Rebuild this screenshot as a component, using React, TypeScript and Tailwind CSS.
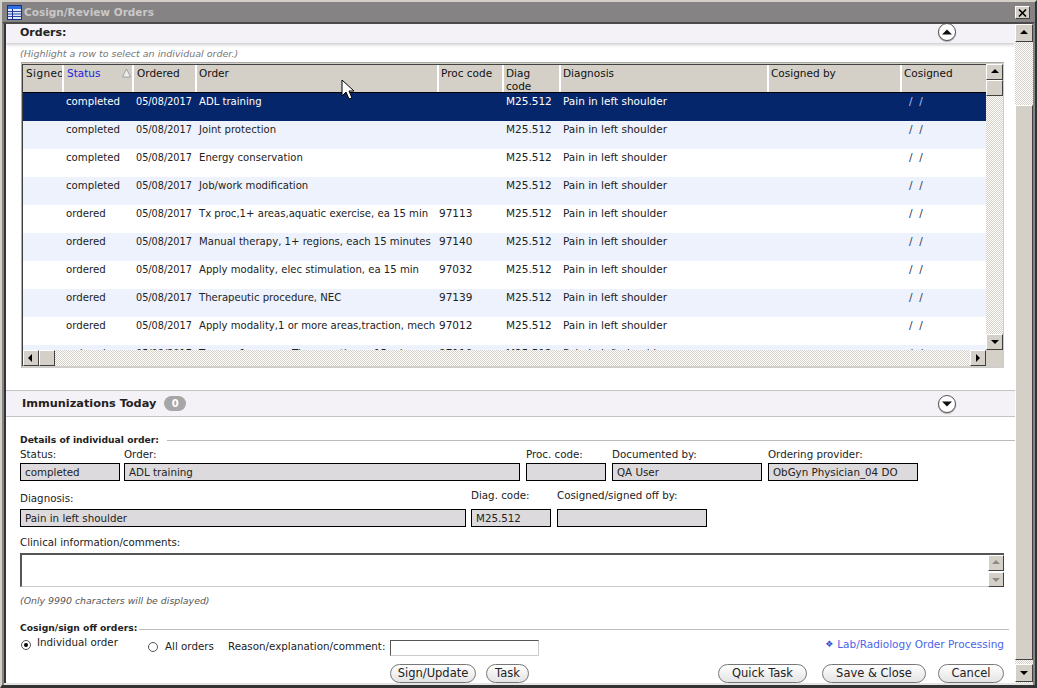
const font = 'font-["DejaVu_Sans",sans-serif]';

const rows = [
  ['completed', '05/08/2017', 'ADL training', ''],
  ['completed', '05/08/2017', 'Joint protection', ''],
  ['completed', '05/08/2017', 'Energy conservation', ''],
  ['completed', '05/08/2017', 'Job/work modification', ''],
  ['ordered', '05/08/2017', 'Tx proc,1+ areas,aquatic exercise, ea 15 min', '97113'],
  ['ordered', '05/08/2017', 'Manual therapy, 1+ regions, each 15 minutes', '97140'],
  ['ordered', '05/08/2017', 'Apply modality, elec stimulation, ea 15 min', '97032'],
  ['ordered', '05/08/2017', 'Therapeutic procedure, NEC', '97139'],
  ['ordered', '05/08/2017', 'Apply modality,1 or more areas,traction, mech', '97012'],
  ['ordered', '05/08/2017', 'Tx proc,1+ areas, Therapeutic ex, 15 min', '97110'],
];

const raised = 'border border-t-white border-l-white border-r-[#404040] border-b-[#404040] bg-[#d4d0c8]';
const dither = 'bg-[repeating-conic-gradient(#d4d0c8_0_25%,#ffffff_0_50%)] bg-[length:2px_2px]';

function Arrow({ dir, muted }: { dir: 'up' | 'down' | 'left' | 'right'; muted?: boolean }) {
  const points = {
    up: '1,6 5,2 9,6',
    down: '1,3 5,7 9,3',
    left: '6,1 2,5 6,9',
    right: '3,1 7,5 3,9',
  }[dir];
  return (
    <svg width="10" height="10" viewBox="0 0 10 10">
      <polygon points={points} fill={muted ? '#8a8a8a' : '#000'} />
    </svg>
  );
}

function ScrollBtn({ dir, className, muted }: { dir: 'up' | 'down' | 'left' | 'right'; className: string; muted?: boolean }) {
  return (
    <div className={`flex shrink-0 items-center justify-center ${raised} ${className}`}>
      <Arrow dir={dir} muted={muted} />
    </div>
  );
}

function Head({ label, className, active }: { label: string; className: string; active?: boolean }) {
  return (
    <div className={`relative shrink-0 overflow-hidden whitespace-nowrap border-white pt-[2px] text-[10.5px] leading-[13px] ${active ? 'text-[#2222dd]' : 'text-[#111]'} ${className}`}>
      {label}
      {active && (
        <svg width="9" height="10" viewBox="0 0 9 10" className="absolute right-[1px] top-[3px]">
          <polygon points="4.5,1 8.5,9 0.5,9" fill="#eeeeee" stroke="#888" strokeWidth="0.7" />
        </svg>
      )}
    </div>
  );
}

function Round({ dir }: { dir: 'up' | 'down' }) {
  return (
    <div className="flex h-[18px] w-[18px] items-center justify-center rounded-full border border-[#555] bg-white shadow-[0_1px_1px_#aaa]">
      <svg width="10" height="6" viewBox="0 0 10 6">
        <polygon points={dir === 'up' ? '0,5.5 5,0.5 10,5.5' : '0,0.5 5,5.5 10,0.5'} fill="#111" />
      </svg>
    </div>
  );
}

function Field({ label, value, className, labelClass }: { label: string; value?: string; className: string; labelClass: string }) {
  return (
    <div className={`shrink-0 ${className}`}>
      <div className={`whitespace-nowrap text-[10.3px] leading-[13px] text-[#222] ${labelClass}`}>{label}</div>
      <div className="h-[18px] whitespace-nowrap border border-black bg-[#dcdadc] pl-1 text-[10.3px] leading-[16px] text-[#222]">{value}</div>
    </div>
  );
}

function Pill({ label, className }: { label: string; className: string }) {
  return (
    <div className={`flex h-[19px] shrink-0 items-center justify-center rounded-full border border-[#777] bg-gradient-to-b from-white to-[#e4e4e4] text-[11.5px] text-[#222] ${className}`}>
      {label}
    </div>
  );
}

export default function App() {
  return (
    <div className={`relative flex h-[688px] w-[1037px] flex-col overflow-hidden border-2 border-b-[3px] border-t-[#d4d0c8] border-l-[#d4d0c8] border-r-[#333] border-b-[#333] ${font}`}>
      {/* Title bar */}
      <div className="flex h-[20px] shrink-0 items-center bg-[#858384] pl-[5px] pr-[5px] pt-[1px]">
        <svg width="15" height="15" viewBox="0 0 15 15" className="mr-[2px] shrink-0">
          <rect x="0.5" y="0.5" width="14" height="14" fill="#dfe8f8" stroke="#1c2f80" />
          <rect x="1" y="1" width="13" height="3" fill="#2f6fe0" />
          <path d="M1 6.5h13M1 9h13M1 11.5h13" stroke="#2a4ca8" />
          <path d="M5.5 4v10" stroke="#1c2f80" />
        </svg>
        <span className="mt-[1px] text-[10.5px] font-bold text-[#c9c7c8]">Cosign/Review Orders</span>
        <div className={`ml-auto flex h-[13px] w-[15px] items-center justify-center ${raised}`}>
          <svg width="9" height="8" viewBox="0 0 9 8">
            <path d="M1 0.5l7 7M8 0.5l-7 7" stroke="#000" strokeWidth="1.6" />
          </svg>
        </div>
      </div>

      <div className="flex min-h-0 flex-1 border-x-2 border-t-2 border-x-[#858384] border-t-[#4a4a4a] bg-[#e4e4e4] pb-[2px]">
        {/* Main form */}
        <div className="flex min-w-0 flex-1 flex-col overflow-hidden border-l-2 border-[#333] bg-white">
          {/* Orders band */}
          <div className="flex h-[19px] shrink-0 items-center bg-[#f5f2f7] pb-[2px] pl-[14px] pr-[59px] shadow-[0_2px_3px_#d0d0d0]">
            <span className="mt-[1px] text-[11px] font-bold text-[#222]">Orders:</span>
            <div className="mb-[1px] ml-auto"><Round dir="up" /></div>
          </div>
          <div className="h-[19px] shrink-0 pl-[14px] pt-[5px] text-[9.5px] italic leading-[12px] text-[#777]">
            (Highlight a row to select an individual order.)
          </div>

          {/* Table */}
          <div className="ml-[15px] flex h-[306px] w-[983px] shrink-0 flex-col border border-[#aaa] border-b-[#ccc] border-r-[#ccc] bg-[#d4d0c8] pb-[1px] pt-[1px]">
            <div className="flex min-h-0 flex-1">
              <div className="flex min-w-0 flex-1 flex-col overflow-hidden border-l border-t border-[#404040]">
                <div className="flex h-[28px] shrink-0 border-b border-black bg-[#d4d0c8]">
                  <Head label="Signed" className="w-[39px] pl-[3px] tracking-[0.4px]" />
                  <Head label="Status" className="w-[70px] border-l-2 pl-[3px]" active />
                  <Head label="Ordered" className="w-[63px] border-l-2 pl-[3px]" />
                  <Head label="Order" className="w-[242px] border-l-2 pl-[2px]" />
                  <Head label="Proc code" className="w-[65px] border-l-2 pl-[2px]" />
                  <Head label="Diag code" className="w-[57px] !whitespace-normal border-l-2 pl-[2px] pr-[14px]" />
                  <Head label="Diagnosis" className="w-[208px] border-l-2 pl-[2px]" />
                  <Head label="Cosigned by" className="w-[133px] border-l-2 pl-[2px]" />
                  <Head label="Cosigned" className="w-[86px] border-l-2 pl-[2px]" />
                </div>
                <div className="min-h-0 flex-1 overflow-hidden">
                  {rows.map((r, i) => (
                    <div
                      key={i}
                      className={`flex h-[28px] pt-[1px] text-[10.5px] leading-[14px] whitespace-nowrap ${i === 0 ? 'bg-[#06266b] text-white' : i % 2 ? 'bg-[#edf2fc] text-[#222]' : 'bg-white text-[#222]'}`}
                    >
                      <div className="w-[39px] shrink-0" />
                      <div className="w-[70px] shrink-0 pl-[4px] pt-[1px] text-[10.2px]">{r[0]}</div>
                      <div className="w-[63px] shrink-0 pl-[4px] pt-[1px] text-[9.7px]">{r[1]}</div>
                      <div className="w-[242px] shrink-0 overflow-hidden pl-[4px] pt-[1px] text-[10.1px]">{r[2]}</div>
                      <div className="w-[65px] shrink-0 pl-[2px]">{r[3]}</div>
                      <div className="w-[57px] shrink-0 pl-[4px]">M25.512</div>
                      <div className="w-[208px] shrink-0 pl-[4px]">Pain in left shoulder</div>
                      <div className="w-[133px] shrink-0" />
                      <div className={`w-[86px] shrink-0 whitespace-pre pl-[9px] ${i === 0 ? 'text-[#a8c8ff]' : 'text-[#335]'}`}>{'/  /'}</div>
                    </div>
                  ))}
                </div>
              </div>
              {/* Table vertical scrollbar */}
              <div className={`flex w-[17px] shrink-0 flex-col ${dither}`}>
                <ScrollBtn dir="up" className="h-[16px] w-[17px]" />
                <div className={`h-[16px] w-[17px] ${raised}`} />
                <div className="flex-1" />
                <ScrollBtn dir="down" className="h-[16px] w-[17px]" />
              </div>
            </div>
            {/* Table horizontal scrollbar */}
            <div className="flex h-[16px] shrink-0 pr-[17px]">
              <div className={`flex flex-1 items-stretch border-l border-[#404040] ${dither}`}>
                <ScrollBtn dir="left" className="w-[16px]" />
                <div className={`w-[16px] ${raised}`} />
                <div className="flex-1" />
                <ScrollBtn dir="right" className="w-[16px]" />
              </div>
            </div>
          </div>

          {/* Immunizations band */}
          <div className="mt-[22px] flex h-[27px] shrink-0 items-center border-y border-[#c4c4c4] bg-[#f5f2f7] pl-[16px] pr-[59px]">
            <span className="mt-[1px] text-[11.3px] font-bold text-[#222]">Immunizations Today</span>
            <span className="ml-2 flex h-[15px] w-[22px] items-center justify-center rounded-full bg-[#a6a6a6] text-[10px] font-bold text-white">0</span>
            <div className="ml-auto"><Round dir="down" /></div>
          </div>

          {/* Details */}
          <div className="mt-[16px] flex h-[14px] shrink-0 items-center pl-[14px]">
            <span className="whitespace-nowrap text-[9.2px] font-bold text-[#222]">Details of individual order:</span>
            <div className="ml-2 mt-[1px] h-px flex-1 bg-[#bbb]" />
          </div>
          <div className="mt-[1px] flex shrink-0 pl-[14px]">
            <Field label="Status:" value="completed" className="w-[100px]" labelClass="h-[15px]" />
            <Field label="Order:" value="ADL training" className="ml-[4px] w-[396px]" labelClass="h-[15px]" />
            <Field label="Proc. code:" className="ml-[6px] w-[80px]" labelClass="h-[15px]" />
            <Field label="Documented by:" value="QA User" className="ml-[6px] w-[150px]" labelClass="h-[15px]" />
            <Field label="Ordering provider:" value="ObGyn Physician_04 DO" className="ml-[6px] w-[150px]" labelClass="h-[15px]" />
          </div>
          <div className="mt-[7px] flex shrink-0 pl-[14px]">
            <Field label="Diagnosis:" value="Pain in left shoulder" className="w-[446px]" labelClass="h-[21px] pt-[4px]" />
            <Field label="Diag. code:" value="M25.512" className="ml-[5px] w-[80px]" labelClass="h-[21px] pt-[1px]" />
            <Field label="Cosigned/signed off by:" className="ml-[6px] w-[150px]" labelClass="h-[21px] pt-[1px]" />
          </div>

          <div className="mt-[9px] h-[16px] shrink-0 pl-[14px] text-[10.25px] leading-[13px] text-[#222]">Clinical information/comments:</div>
          <div className="ml-[14px] mt-[1px] flex h-[34px] w-[984px] shrink-0 border-l-2 border-t-2 border-b border-[#555] border-b-[#ccc] bg-white">
            <div className="ml-auto flex w-[16px] flex-col gap-[1px]">
              <ScrollBtn dir="up" muted className="h-[16px] w-[16px]" />
              <ScrollBtn dir="down" muted className="h-[15px] w-[16px]" />
            </div>
          </div>
          <div className="mt-[8px] h-[14px] shrink-0 pl-[14px] text-[9.4px] italic leading-[12px] text-[#555]">(Only 9990 characters will be displayed)</div>

          {/* Cosign */}
          <div className="mt-[12px] flex h-[13px] shrink-0 items-center pl-[14px] pr-[6px]">
            <span className="whitespace-nowrap text-[9.2px] font-bold text-[#222]">Cosign/sign off orders:</span>
            <div className="ml-[2px] mt-[3px] h-px flex-1 bg-[#bbb]" />
          </div>
          <div className="mt-[1px] flex h-[24px] shrink-0 pl-[14px] pr-[11px] text-[10.3px] text-[#222]">
            <div className="flex w-[128px] shrink-0">
              <span className="ml-[1px] mt-[5px] flex h-[10px] w-[10px] items-center justify-center rounded-full border border-[#555] bg-white">
                <span className="h-[4px] w-[4px] rounded-full bg-black" />
              </span>
              <span className="ml-[6px] leading-[14px]">Individual order</span>
            </div>
            <div className="flex h-[24px] items-center">
              <span className="h-[10px] w-[10px] shrink-0 rounded-full border border-[#555] bg-white" />
              <span className="ml-[7px] w-[63px] shrink-0">All orders</span>
              <span className="w-[162px] shrink-0 whitespace-nowrap">Reason/explanation/comment:</span>
              <div className="mt-[2px] h-[16px] w-[149px] shrink-0 border border-[#555] border-b-[#ccc] border-r-[#ccc] bg-white" />
            </div>
            <div className="ml-auto flex h-[19px] items-center whitespace-nowrap text-[10.5px] text-[#4a66e8]">
              <span className="mr-[4px] text-[9px] text-[#2f4fd8]">❖</span>Lab/Radiology Order Processing
            </div>
          </div>
          <div className="mt-[5px] flex shrink-0 pl-[384px] pr-[11px]">
            <Pill label="Sign/Update" className="w-[86px]" />
            <Pill label="Task" className="ml-[10px] w-[43px]" />
            <Pill label="Quick Task" className="ml-auto w-[89px]" />
            <Pill label="Save & Close" className="ml-[15px] w-[104px]" />
            <Pill label="Cancel" className="ml-[12px] w-[66px]" />
          </div>
        </div>

        {/* Window scrollbar */}
        <div className={`flex w-[18px] shrink-0 flex-col pb-[1px] ${dither}`}>
          <ScrollBtn dir="up" className="h-[18px] w-[18px]" />
          <div className="h-[63px]" />
          <div className={`flex-1 ${raised}`} />
          <div className="h-[4px]" />
          <ScrollBtn dir="down" className="h-[18px] w-[18px]" />
        </div>
      </div>

      {/* Mouse pointer */}
      <svg width="14" height="22" viewBox="0 0 14 22" className="absolute left-[339px] top-[77px]">
        <path d="M1 1v16l4-4 3 7 3-1-3-7h5z" fill="#fff" stroke="#000" />
      </svg>
    </div>
  );
}
